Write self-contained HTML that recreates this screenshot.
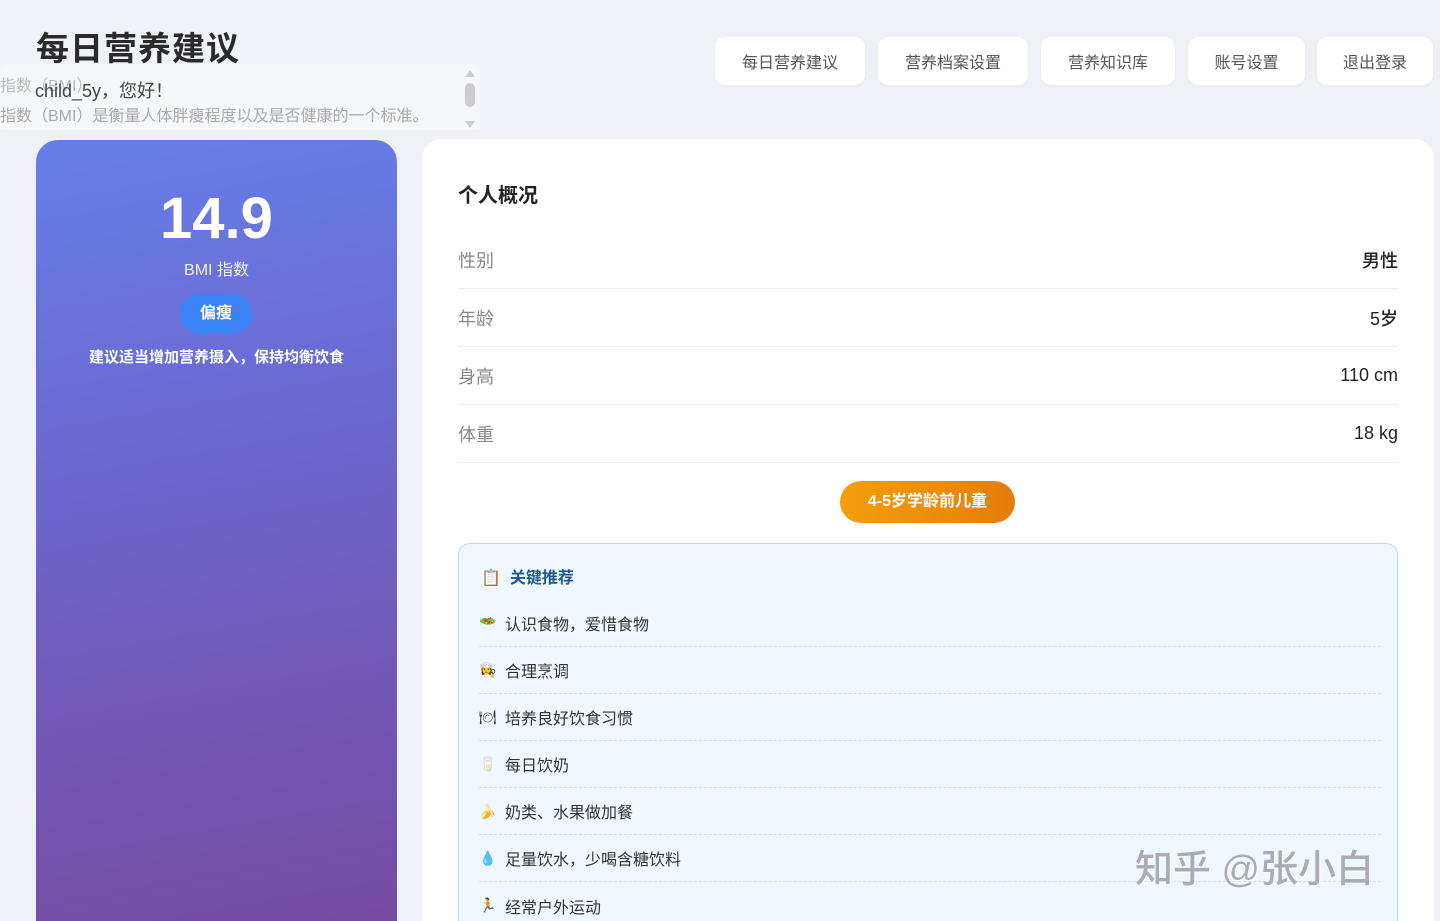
<!DOCTYPE html>
<html><head><meta charset="utf-8"><style>
*{margin:0;padding:0;box-sizing:border-box}
html,body{width:1440px;height:921px;overflow:hidden}
body{background:#eff1f6;font-family:"Liberation Sans","Noto Sans CJK SC",sans-serif;position:relative;color:#333}
.abs{position:absolute}
h1{position:absolute;left:36px;top:22px;font-size:33px;font-weight:700;color:#2a2a2a;letter-spacing:1px}
.tip{position:absolute;left:0;top:64px;width:480px;height:66px;background:rgba(248,249,252,.8);border-radius:4px}
.btn{position:absolute;top:37px;height:48px;background:#fff;border-radius:10px;font-size:16px;color:#555;display:flex;align-items:center;justify-content:center;box-shadow:0 1px 3px rgba(0,0,0,.04)}
.left{position:absolute;left:36px;top:140px;width:361px;height:781px;border-radius:22px 22px 0 0;background:linear-gradient(170deg,#667eea 0%,#6e62c6 50%,#764ba2 100%);color:#fff;text-align:center}
.right{position:absolute;left:422px;top:139px;width:1012px;height:782px;background:#fff;border-radius:20px 20px 0 0;overflow:hidden}
.row{position:absolute;left:36px;width:940px;height:58px;border-bottom:1px solid #eee;display:flex;justify-content:space-between;align-items:center;font-size:18px}
.row .k{color:#888}.row .v{color:#222;font-weight:500}
.rec{position:absolute;left:36px;top:404px;width:940px;height:420px;background:#f0f8ff;border:1px solid #b8dcef;border-radius:12px}
.it{position:absolute;left:20px;width:902px;height:47px;border-bottom:1px dashed #cfe0ee;font-size:16px;color:#333;display:flex;align-items:center}
.it span.e{width:26px;font-size:14px}
</style></head><body>
<h1>每日营养建议</h1>
<div class="tip"></div>
<div class="abs" style="left:0;top:72px;font-size:16px;color:#bbb">指数（BMI）</div>
<div class="abs" style="left:35px;top:77px;font-size:18px;color:#444">child_5y，您好！</div>
<div class="abs" style="left:0;top:102px;font-size:16px;color:#aaa">指数（BMI）是衡量人体胖瘦程度以及是否健康的一个标准。</div>
<div class="abs" style="left:465px;top:68px;width:10px;height:60px">
 <div style="width:0;height:0;border:5px solid transparent;border-bottom:7px solid #ccc;border-top:0;margin-top:2px"></div>
 <div style="width:10px;height:24px;background:#ccc;border-radius:5px;margin-top:6px"></div>
 <div style="width:0;height:0;border:5px solid transparent;border-top:7px solid #ccc;border-bottom:0;margin-top:14px"></div>
</div>
<div class="btn" style="left:715px;width:150px">每日营养建议</div>
<div class="btn" style="left:878px;width:150px">营养档案设置</div>
<div class="btn" style="left:1041px;width:134px">营养知识库</div>
<div class="btn" style="left:1188px;width:117px">账号设置</div>
<div class="btn" style="left:1317px;width:116px">退出登录</div>
<div class="left">
 <div style="position:absolute;left:0;right:0;top:44px;font-size:58px;font-weight:700;line-height:70px">14.9</div>
 <div style="position:absolute;left:0;right:0;top:116px;font-size:16px;opacity:.9">BMI 指数</div>
 <div style="position:absolute;left:144px;top:154px;width:72px;height:40px;border-radius:20px;background:#3b82f6;font-size:16px;font-weight:700;line-height:40px">偏瘦</div>
 <div style="position:absolute;left:0;right:0;top:206px;font-size:15px;font-weight:600">建议适当增加营养摄入，保持均衡饮食</div>
</div>
<div class="right">
 <div class="abs" style="left:36px;top:40px;font-size:20px;font-weight:700;color:#222">个人概况</div>
 <div class="row" style="top:92px"><span class="k">性别</span><span class="v">男性</span></div>
 <div class="row" style="top:150px"><span class="k">年龄</span><span class="v">5岁</span></div>
 <div class="row" style="top:208px"><span class="k">身高</span><span class="v">110 cm</span></div>
 <div class="row" style="top:266px"><span class="k">体重</span><span class="v">18 kg</span></div>
 <div class="abs" style="left:418px;top:342px;width:175px;height:42px;border-radius:21px;background:linear-gradient(90deg,#f59e0b,#e57d0a);color:#fff;font-weight:700;font-size:16px;text-align:center;line-height:42px">4-5岁学龄前儿童</div>
 <div class="rec">
  <div class="abs" style="left:22px;top:20px;font-size:16px;font-weight:700;color:#1e5a8a">📋&nbsp; 关键推荐</div>
  <div class="it" style="top:56px"><span class="e">🥗</span>认识食物，爱惜食物</div>
  <div class="it" style="top:103px"><span class="e">👩‍🍳</span>合理烹调</div>
  <div class="it" style="top:150px"><span class="e">🍽</span>培养良好饮食习惯</div>
  <div class="it" style="top:197px"><span class="e">🥛</span>每日饮奶</div>
  <div class="it" style="top:244px"><span class="e">🍌</span>奶类、水果做加餐</div>
  <div class="it" style="top:291px"><span class="e">💧</span>足量饮水，少喝含糖饮料</div>
  <div class="it" style="top:338px;border:none"><span class="e">🏃</span>经常户外运动</div>
  <div class="abs" style="left:676px;top:294px;font-size:38px;color:#a9adb3;font-weight:500;white-space:nowrap;text-shadow:1px 1px 0 #fff">知乎 @张小白</div>
 </div>
</div>
</body></html>
